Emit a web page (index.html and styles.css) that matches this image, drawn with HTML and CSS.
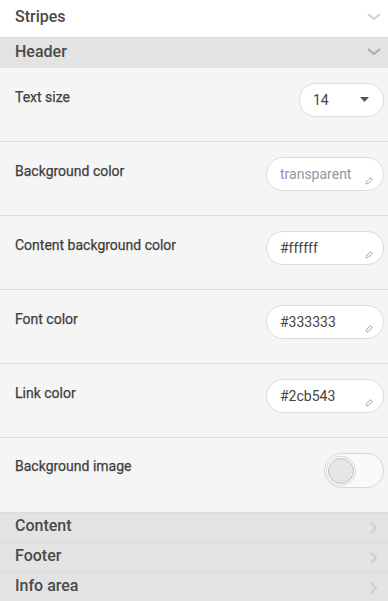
FILE: index.html
```html
<!DOCTYPE html>
<html lang="en">
<head>
    <meta charset="UTF-8">
    <meta name="viewport" content="width=device-width, initial-scale=1.0">
    <title>Stripes settings</title>
    <link rel="stylesheet" href="styles.css">
</head>
<body>
    <div class="section section-top">
        <span class="section-title">Stripes</span>
        <svg class="chev" width="14" height="8" viewBox="0 0 14 8"><path d="M1 1 L7 6 L13 1" fill="none" stroke="#d0d0d0" stroke-width="2"/></svg>
    </div>
    <div class="section section-open">
        <span class="section-title">Header</span>
        <svg class="chev" width="14" height="8" viewBox="0 0 14 8"><path d="M1 1 L7 6 L13 1" fill="none" stroke="#a9a9a9" stroke-width="2"/></svg>
    </div>
    <div class="panel">
        <div class="field">
            <label class="field-label">Text size</label>
            <div class="select-box">
                <span>14</span>
                <svg width="9" height="5" viewBox="0 0 9 5"><path d="M0 0 L9 0 L4.5 5 Z" fill="#555"/></svg>
            </div>
        </div>
        <div class="field">
            <label class="field-label">Background color</label>
            <div class="color-box">
                <span class="placeholder">transparent</span>
                <svg class="pen" width="8" height="8" viewBox="0 0 8 8"><path d="M1.5 6.8 L1 5 L4.8 1.3 Q5.8 0.5 6.6 1.3 Q7.4 2.2 6.6 3.1 L2.9 6.8 Z" fill="none" stroke="#9a9a9a" stroke-width="0.9"/></svg>
            </div>
        </div>
        <div class="field">
            <label class="field-label">Content background color</label>
            <div class="color-box">
                <span>#ffffff</span>
                <svg class="pen" width="8" height="8" viewBox="0 0 8 8"><path d="M1.5 6.8 L1 5 L4.8 1.3 Q5.8 0.5 6.6 1.3 Q7.4 2.2 6.6 3.1 L2.9 6.8 Z" fill="none" stroke="#9a9a9a" stroke-width="0.9"/></svg>
            </div>
        </div>
        <div class="field">
            <label class="field-label">Font color</label>
            <div class="color-box">
                <span>#333333</span>
                <svg class="pen" width="8" height="8" viewBox="0 0 8 8"><path d="M1.5 6.8 L1 5 L4.8 1.3 Q5.8 0.5 6.6 1.3 Q7.4 2.2 6.6 3.1 L2.9 6.8 Z" fill="none" stroke="#9a9a9a" stroke-width="0.9"/></svg>
            </div>
        </div>
        <div class="field">
            <label class="field-label">Link color</label>
            <div class="color-box">
                <span>#2cb543</span>
                <svg class="pen" width="8" height="8" viewBox="0 0 8 8"><path d="M1.5 6.8 L1 5 L4.8 1.3 Q5.8 0.5 6.6 1.3 Q7.4 2.2 6.6 3.1 L2.9 6.8 Z" fill="none" stroke="#9a9a9a" stroke-width="0.9"/></svg>
            </div>
        </div>
        <div class="field field-last">
            <label class="field-label">Background image</label>
            <div class="toggle">
                <div class="toggle-knob"></div>
            </div>
        </div>
    </div>
    <div class="section section-closed">
        <span class="section-title">Content</span>
        <svg class="chev-right" width="7" height="12" viewBox="0 0 7 12"><path d="M1 1 L6 6 L1 11" fill="none" stroke="#cfcfcf" stroke-width="2"/></svg>
    </div>
    <div class="section section-closed">
        <span class="section-title">Footer</span>
        <svg class="chev-right" width="7" height="12" viewBox="0 0 7 12"><path d="M1 1 L6 6 L1 11" fill="none" stroke="#cfcfcf" stroke-width="2"/></svg>
    </div>
    <div class="section section-closed">
        <span class="section-title">Info area</span>
        <svg class="chev-right" width="7" height="12" viewBox="0 0 7 12"><path d="M1 1 L6 6 L1 11" fill="none" stroke="#cfcfcf" stroke-width="2"/></svg>
    </div>
</body>
</html>
```
FILE: styles.css
```css
body {
    margin: 0;
    font-family: Roboto, "Liberation Sans", sans-serif;
    color: #4a4a4a;
    background: #f5f5f5;
}
.section {
    display: flex;
    justify-content: space-between;
    align-items: center;
    padding: 0 7px 3px 15px;
    border-bottom: 1px solid #dadada;
    box-sizing: border-box;
}
.section-title {
    font-size: 16px;
    font-weight: 500;
    color: #4a4a4a;
}
.section-top {
    height: 38px;
    background: #fff;
    padding-bottom: 4px;
}
.section-open {
    height: 30px;
    background: #e3e3e3;
    border-bottom: none;
}
.section-closed {
    height: 30px;
    background: #e3e3e3;
    padding-right: 11px;
    padding-bottom: 4px;
}
.section-closed .chev-right {
    margin-top: 4px;
}
.panel {
    background: #f5f5f5;
}
.field {
    display: flex;
    justify-content: space-between;
    align-items: flex-start;
    padding: 15px 4px 24px 15px;
    border-bottom: 1px solid #dcdcdc;
}
.field-last {
    padding-top: 14px;
    padding-bottom: 24px;
}
.field-label {
    font-size: 14px;
    font-weight: 400;
    color: #3f3f3f;
    padding-top: 6px;
    -webkit-text-stroke: 0.25px #3f3f3f;
}
.select-box {
    width: 85px;
    height: 34px;
    box-sizing: border-box;
    border: 1px solid #dcdcdc;
    border-radius: 17px;
    background: #fff;
    display: flex;
    justify-content: space-between;
    align-items: center;
    padding: 0 14px 1px 13px;
    font-size: 14px;
    color: #444;
}
.color-box {
    width: 118px;
    height: 34px;
    box-sizing: border-box;
    border: 1px solid #dcdcdc;
    border-radius: 17px;
    background: #fff;
    display: flex;
    justify-content: space-between;
    align-items: center;
    padding: 0 9px 1px 13px;
    font-size: 14px;
    color: #444;
    position: relative;
}
.placeholder {
    color: #8f97a8;
}
.pen {
    position: absolute;
    right: 10px;
    bottom: 5px;
}
.toggle {
    width: 60px;
    height: 35px;
    box-sizing: border-box;
    border: 1px solid #d6d6d6;
    border-radius: 18px;
    background: #fafafa;
    display: flex;
    align-items: center;
    padding-left: 3px;
    margin-top: 1px;
}
.toggle-knob {
    width: 26px;
    height: 26px;
    box-sizing: border-box;
    border-radius: 50%;
    background: #e6e6e6;
    border: 1px solid #bdbdbd;
    box-shadow: 0 0 0 1px #fff, 0 0 0 2px #d8d8d8;
}
```
